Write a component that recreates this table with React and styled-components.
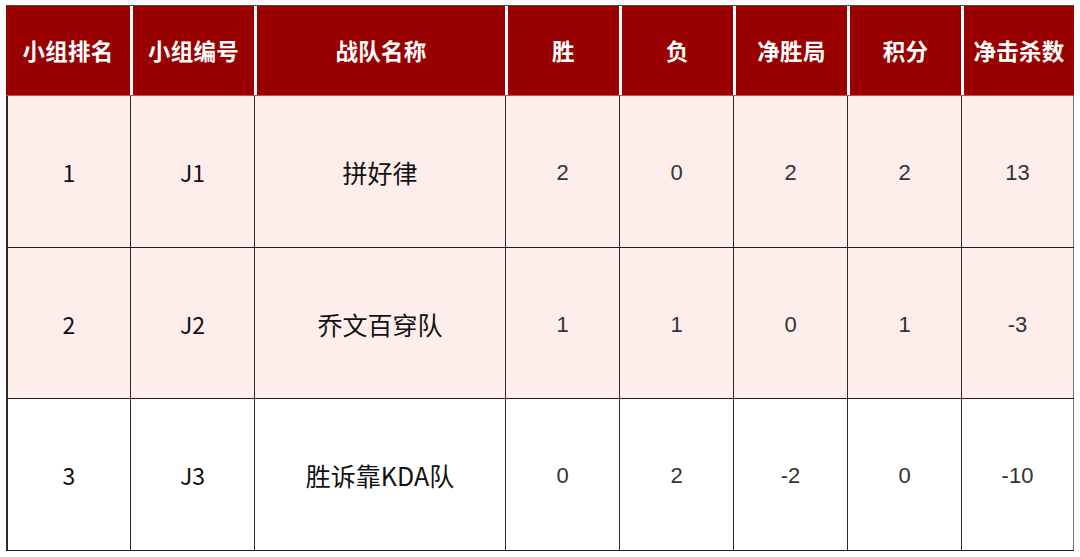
import React from 'react'
import styled, { createGlobalStyle } from 'styled-components'

const GlobalStyle = createGlobalStyle`
  html, body {
    margin: 0;
    padding: 0;
    background: #ffffff;
    font-family: "Noto Sans CJK SC", "Noto Sans", sans-serif;
  }
`

const columns = '124px 124px 251px 114px 114px 114px 114px 113px'

const headers = ['小组排名', '小组编号', '战队名称', '胜', '负', '净胜局', '积分', '净击杀数']

const rows = [
  { rank: '1', code: 'J1', name: '拼好律', stats: ['2', '0', '2', '2', '13'], tint: true },
  { rank: '2', code: 'J2', name: '乔文百穿队', stats: ['1', '1', '0', '1', '-3'], tint: true },
  { rank: '3', code: 'J3', name: '胜诉靠KDA队', stats: ['0', '2', '-2', '0', '-10'], tint: false },
]

const App = () => {
  return (
    <Page>
      <GlobalStyle />
      <Table>
        <HeadRow>
          {headers.map((h, i) => (
            <HeadCell key={h} first={i === 0}>{h}</HeadCell>
          ))}
        </HeadRow>
        {rows.map((r) => (
          <BodyRow key={r.rank} tint={r.tint}>
            <Cell first>{r.rank}</Cell>
            <Cell>{r.code}</Cell>
            <Cell wide>{r.name}</Cell>
            {r.stats.map((s, i) => (
              <NumCell key={i} last={i === r.stats.length - 1}>{s}</NumCell>
            ))}
          </BodyRow>
        ))}
      </Table>
    </Page>
  )
}

export default App

const Page = styled.div`
  padding: 5px 0 0 6px;
  width: 1080px;
  height: 557px;
  box-sizing: border-box;
`

const Table = styled.div`
  width: 1068px;
  display: flex;
  flex-direction: column;
`

const HeadRow = styled.div`
  display: grid;
  grid-template-columns: ${columns};
  height: 91px;
  box-sizing: border-box;
  border-top: 1px solid #4a4a4a;
  border-bottom: 1px solid #c84a4a;
  background: #ffffff;
`

const HeadCell = styled.div`
  display: flex;
  align-items: center;
  justify-content: center;
  background: #990000;
  color: #ffffff;
  font-weight: 700;
  font-size: 22.5px;
  letter-spacing: 0.3px;
  margin-left: ${(p) => (p.first ? '0' : '3px')};
  padding-bottom: 2px;
`

const BodyRow = styled.div`
  display: grid;
  grid-template-columns: ${columns};
  height: 151.6px;
  box-sizing: border-box;
  border-bottom: 1.5px solid #1e1e1e;
  background: ${(p) => (p.tint ? '#fdeeec' : '#ffffff')};
`

const Cell = styled.div`
  display: flex;
  align-items: center;
  justify-content: center;
  box-sizing: border-box;
  padding-top: 2px;
  border-left: ${(p) => (p.first ? '2px solid #2a2a2a' : '1.5px solid #2a2a2a')};
  font-size: ${(p) => (p.wide ? '25px' : '23px')};
  color: #111111;
`

const NumCell = styled.div`
  display: flex;
  align-items: center;
  justify-content: center;
  box-sizing: border-box;
  padding-top: 4px;
  border-left: 1.5px solid #2a2a2a;
  border-right: ${(p) => (p.last ? '1.5px solid #777777' : 'none')};
  font-family: "Liberation Sans", Arial, sans-serif;
  font-size: 22px;
  color: #333333;
`
